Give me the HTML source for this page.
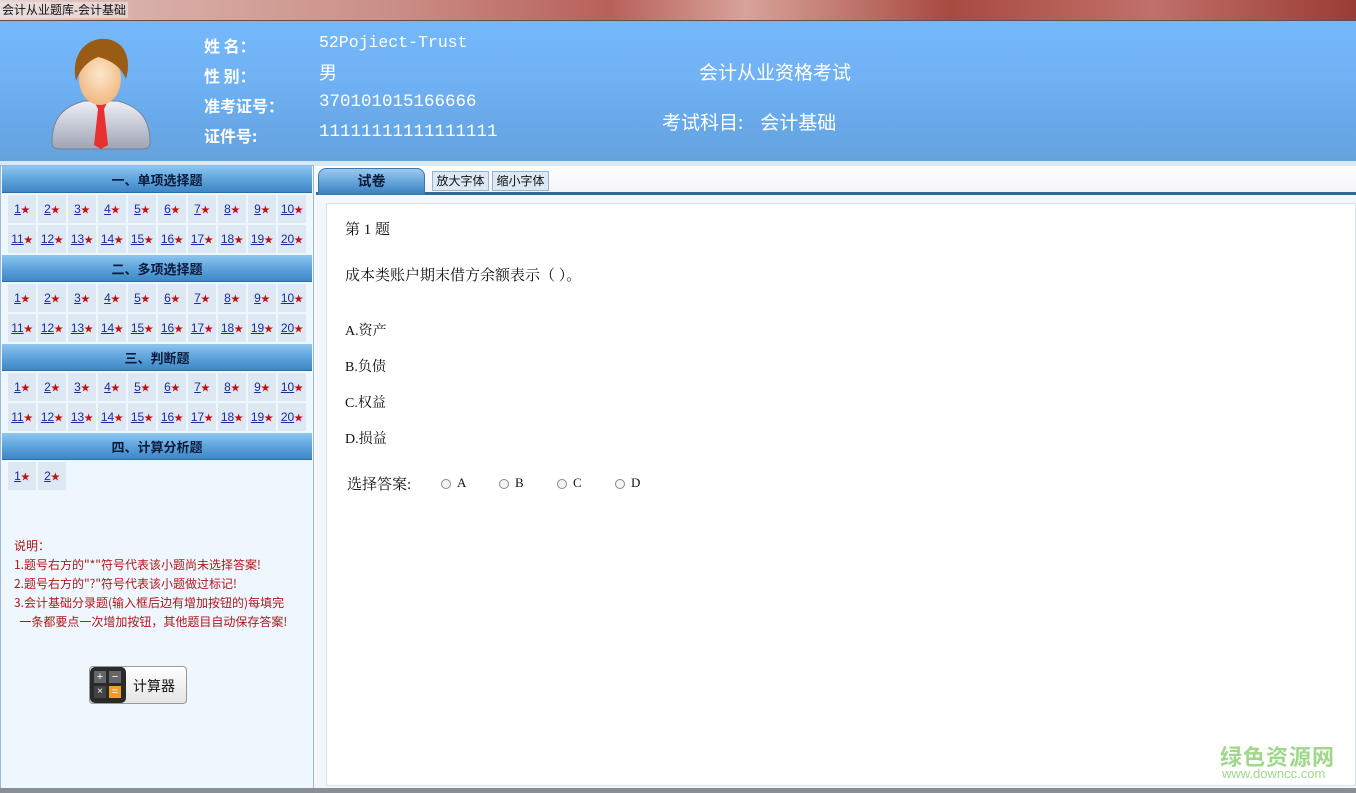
<!DOCTYPE html>
<html><head><meta charset="utf-8"><style>
*{margin:0;padding:0;box-sizing:border-box}
body{width:1356px;height:793px;overflow:hidden;position:relative;background:#f3f6fa;font-family:"Liberation Sans","Noto Sans CJK SC",sans-serif}
.abs{position:absolute}
#title{left:0;top:0;width:1356px;height:21px;background:linear-gradient(90deg,#e8d8d8 0,#d9b0a8 10%,#c98c84 30%,#b8605a 45%,#d7a39a 55%,#a84a40 70%,#c0706a 85%,#9a3c34 100%);border-bottom:1px solid #6b4a4a}
#title span{position:absolute;left:0;top:2px;font-size:12px;color:#111;background:rgba(235,225,225,.7);padding:0 2px;line-height:16px}
#head{left:0;top:21px;width:1356px;height:140px;background:linear-gradient(180deg,#74b8fb 0,#70b2f4 40%,#68a8e8 75%,#64a3dc 100%)}
.hl{color:#fff;font-size:16px;font-weight:bold;font-family:"Noto Sans CJK SC",sans-serif}
.hv{color:#fff;font-size:16.5px;font-family:"Liberation Mono","Noto Sans CJK SC",monospace}
.hc{color:#fff;font-size:19px;font-family:"Noto Sans CJK SC",sans-serif}
#strip{left:0;top:161px;width:1356px;height:5px;background:#d8e8f4}
#left{left:0;top:165px;width:314px;height:628px;background:#eef6fe;border:1px solid #9bb8d8}
.sh{position:absolute;left:2px;width:310px;height:27px;background:linear-gradient(180deg,#8ec6f0 0,#5fa4dc 50%,#3f86c4 100%);border-bottom:1px solid #2d6ea8;text-align:center;font-size:13px;font-weight:bold;color:#0a1a3a;line-height:27px;font-family:"Noto Sans CJK SC",sans-serif}
.c{position:absolute;width:28px;height:28px;background:#dde8f3;font-size:12px;line-height:28px;text-align:center;color:#1a2aa0;white-space:nowrap}
.c u{text-decoration:underline}
.c b{color:#c01010;font-size:9px}
#tabbar{left:316px;top:166px;width:1040px;height:29px;background:linear-gradient(180deg,#fff 0,#f4f4f8 100%);border-bottom:3px solid #2f6a98}
#tab{left:318px;top:168px;width:107px;height:27px;border-radius:8px 8px 0 0;background:linear-gradient(180deg,#9ccaf0 0,#5d9fd6 60%,#3c7fbe 100%);border:1px solid #3a78b0;text-align:center;font-size:14px;font-weight:bold;color:#0a1a3a;line-height:24px;font-family:"Noto Sans CJK SC",sans-serif}
.btn{top:171px;height:20px;width:57px;background:#dce8f4;border:1px solid #9ab4cc;font-size:12px;line-height:18px;text-align:center;color:#111;font-family:"Noto Sans CJK SC",sans-serif}
#panel{left:326px;top:203px;width:1030px;height:583px;background:#fff;border:1px solid #d8e2ec}
.t{color:#111;font-size:15px;font-family:"Liberation Serif","Noto Serif CJK SC",serif}
.r{display:inline-block;width:10px;height:10px;border:1px solid #888;border-radius:50%;vertical-align:middle;margin-right:6px;background:#f4f4f4}
.note{color:#b01818;font-size:12px;line-height:19px;font-family:"Noto Sans CJK SC",sans-serif}
#bot{left:0;top:788px;width:1356px;height:5px;background:#8a8f96}
</style></head><body>
<div id="title" class="abs"><span>会计从业题库-会计基础</span></div>
<div id="head" class="abs">
<svg class="abs" style="left:48px;top:14px" width="106" height="116" viewBox="0 0 106 116">
<defs><linearGradient id="sh" x1="0" y1="0" x2="0" y2="1"><stop offset="0" stop-color="#eef0f6"/><stop offset="1" stop-color="#9ea4b4"/></linearGradient>
<radialGradient id="fc" cx=".5" cy=".4" r=".6"><stop offset="0" stop-color="#fde6cc"/><stop offset="1" stop-color="#f0b880"/></radialGradient></defs>
<path d="M4 108 C4 84 14 72 36 66 L70 66 C92 72 102 84 102 108 Q102 114 94 114 L12 114 Q4 114 4 108Z" fill="url(#sh)" stroke="#7a8090"/>
<path d="M46 66 L60 66 L56 74 L60 110 L53 114 L46 110 L50 74Z" fill="#e83030"/>
<ellipse cx="52" cy="44" rx="21" ry="26" fill="url(#fc)"/>
<path d="M28 46 C22 18 40 2 58 4 C76 6 84 22 78 44 C74 34 66 26 50 22 C40 26 32 34 28 46Z" fill="#9a5c14"/>
</svg>
<div class="abs hl" style="left:204px;top:12px">姓 名：</div>
<div class="abs hl" style="left:204px;top:42px">性 别：</div>
<div class="abs hl" style="left:204px;top:72px">准考证号：</div>
<div class="abs hl" style="left:204px;top:102px">证件号:</div>
<div class="abs hv" style="left:319px;top:12px">52Pojiect-Trust</div>
<div class="abs hc" style="left:319px;top:38px;font-size:18px">男</div>
<div class="abs hv" style="left:319px;top:71px;font-size:17.5px">370101015166666</div>
<div class="abs hv" style="left:319px;top:101px;font-size:17.5px">11111111111111111</div>
<div class="abs hc" style="left:699px;top:37px">会计从业资格考试</div>
<div class="abs hc" style="left:662px;top:87px">考试科目:&nbsp;&nbsp;&nbsp;&nbsp;会计基础</div>
</div>
<div id="strip" class="abs"></div>
<div id="left" class="abs"></div>
<div id="cells"></div>
<div id="tabbar" class="abs"></div>
<div id="tab" class="abs">试卷</div>
<div class="abs btn" style="left:432px">放大字体</div>
<div class="abs btn" style="left:492px">缩小字体</div>
<div id="panel" class="abs"></div>
<div class="abs t" style="left:345px;top:218px">第 1 题</div>
<div class="abs t" style="left:345px;top:264px">成本类账户期末借方余额表示（ ）。</div>
<div class="abs t" style="left:345px;top:320px;font-size:14px">A.资产</div>
<div class="abs t" style="left:345px;top:356px;font-size:14px">B.负债</div>
<div class="abs t" style="left:345px;top:392px;font-size:14px">C.权益</div>
<div class="abs t" style="left:345px;top:428px;font-size:14px">D.损益</div>
<div class="abs t" style="left:347px;top:473px">选择答案:</div>
<div class="abs t" style="left:441px;top:475px;font-size:13px"><span class="r"></span>A</div>
<div class="abs t" style="left:499px;top:475px;font-size:13px"><span class="r"></span>B</div>
<div class="abs t" style="left:557px;top:475px;font-size:13px"><span class="r"></span>C</div>
<div class="abs t" style="left:615px;top:475px;font-size:13px"><span class="r"></span>D</div>
<div class="abs note" style="left:14px;top:536px">说明：<br>1.题号右方的"*"符号代表该小题尚未选择答案!<br>2.题号右方的"?"符号代表该小题做过标记!<br>3.会计基础分录题(输入框后边有增加按钮的)每填完<br>&nbsp;&nbsp;一条都要点一次增加按钮，其他题目自动保存答案!</div>
<div class="abs" style="left:89px;top:666px;width:98px;height:38px;border:1px solid #999;border-radius:4px;background:linear-gradient(180deg,#fff,#e4e4e4)"></div>
<div class="abs" style="left:90px;top:667px;width:36px;height:36px;border-radius:5px;background:#2a2a2a"></div>
<div class="abs" style="left:94px;top:671px;width:12px;height:12px;background:#666;color:#fff;font-size:11px;line-height:12px;text-align:center">+</div>
<div class="abs" style="left:109px;top:671px;width:12px;height:12px;background:#666;color:#fff;font-size:11px;line-height:12px;text-align:center">−</div>
<div class="abs" style="left:94px;top:686px;width:12px;height:12px;background:#444;color:#fff;font-size:10px;line-height:12px;text-align:center">×</div>
<div class="abs" style="left:109px;top:686px;width:12px;height:12px;background:#f0a020;color:#fff;font-size:11px;line-height:12px;text-align:center">=</div>
<div class="abs" style="left:133px;top:676px;font-size:14px;color:#111;font-family:'Noto Sans CJK SC',sans-serif">计算器</div>
<div class="abs" style="left:1220px;top:740px;font-size:22px;font-weight:bold;color:#9fd88a;font-family:'Noto Sans CJK SC',sans-serif;letter-spacing:1px">绿色资源网</div>
<div class="abs" style="left:1222px;top:766px;font-size:13px;color:#9fd88a">www.downcc.com</div>
<div id="bot" class="abs"></div>
<script>
var h='';
function sec(y,title,rows,n){h+='<div class="sh" style="top:'+y+'px">'+title+'</div>';
var k=0;for(var r=0;r<rows;r++){for(var i=0;i<10&&k<n;i++){k++;h+='<div class="c" style="left:'+(8+i*30)+'px;top:'+(y+29+r*30)+'px"><u>'+k+'</u><b>★</b></div>';}}}
sec(166,'一、单项选择题',2,20);sec(255,'二、多项选择题',2,20);sec(344,'三、判断题',2,20);sec(433,'四、计算分析题',1,2);
document.getElementById('cells').innerHTML=h;
</script>
</body></html>
